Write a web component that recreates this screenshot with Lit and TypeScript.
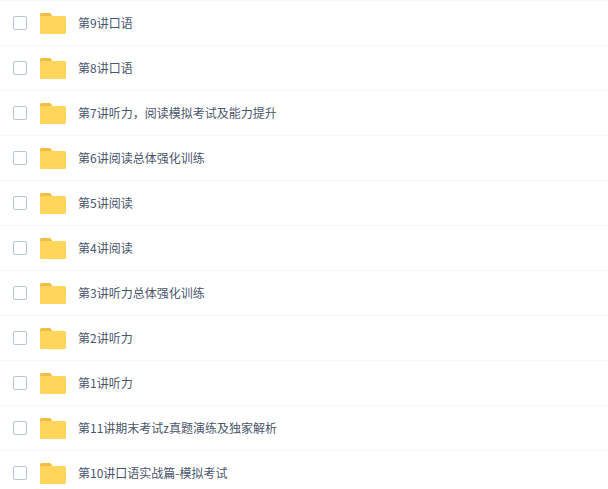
import { LitElement, html, css, svg } from "lit";
import { customElement } from "lit/decorators.js";

const ITEMS = [
  "第9讲口语",
  "第8讲口语",
  "第7讲听力，阅读模拟考试及能力提升",
  "第6讲阅读总体强化训练",
  "第5讲阅读",
  "第4讲阅读",
  "第3讲听力总体强化训练",
  "第2讲听力",
  "第1讲听力",
  "第11讲期末考试z真题演练及独家解析",
  "第10讲口语实战篇-模拟考试",
];

const folder = svg`<path d="M0 5V1.5A1.5 1.5 0 0 1 1.5 0H9.6a1.5 1.5 0 0 1 1.2.6L12.6 3.5V5z" fill="#f2bc45"/><rect x="0" y="3" width="26" height="18" rx="1.5" fill="#ffd659"/>`;

@customElement("app-root")
export class AppRoot extends LitElement {
  static styles = css`
    :host {
      display: block;
      width: 608px;
      height: 489px;
      overflow: hidden;
      background: #fff;
      font-family: "Microsoft YaHei", "Noto Sans CJK SC", sans-serif;
    }
    .list {
      display: flex;
      flex-direction: column;
    }
    .row {
      display: flex;
      align-items: center;
      height: 44px;
      border-top: 1px solid #f5f6fa;
      padding-left: 13px;
    }
    .check {
      box-sizing: border-box;
      width: 14px;
      height: 14px;
      border: 1px solid #b8c4d4;
      border-radius: 2px;
      background: #fff;
      flex: none;
    }
    .icon {
      width: 26px;
      height: 21px;
      margin: 1px 0 0 13px;
      flex: none;
      display: block;
    }
    .name {
      margin-left: 12px;
      font-size: 12px;
      line-height: 16px;
      color: #4a556c;
      white-space: nowrap;
    }
  `;

  render() {
    return html`<div class="list">
      ${ITEMS.map(
        (t) => html`<div class="row">
          <span class="check"></span>
          <svg class="icon" viewBox="0 0 26 21">${folder}</svg>
          <span class="name">${t}</span>
        </div>`
      )}
    </div>`;
  }
}
